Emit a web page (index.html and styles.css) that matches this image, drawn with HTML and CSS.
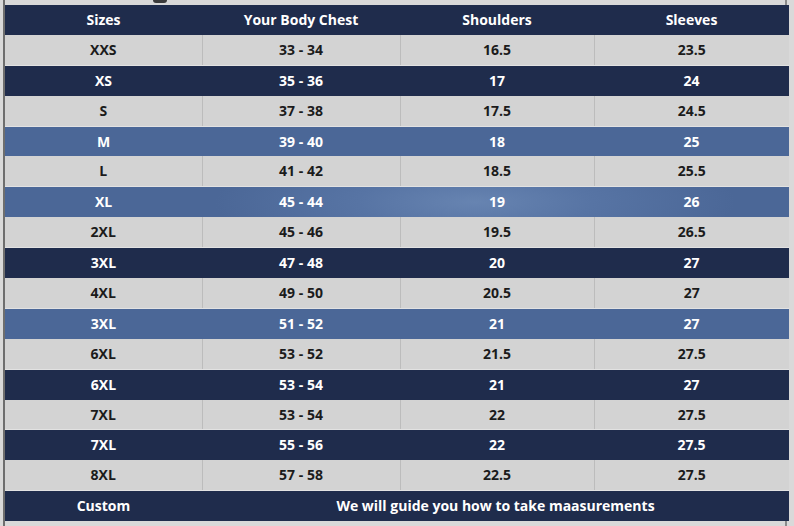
FILE: index.html
```html
<!DOCTYPE html>
<html>
<head>
<meta charset="utf-8">
<link rel="stylesheet" href="styles.css">
</head>
<body>
<div class="frame">
  <span class="smudge"></span>
  <table class="chart">
    <colgroup>
      <col class="c1"><col class="c2"><col class="c3"><col class="c4">
    </colgroup>
    <thead>
      <tr class="navy"><th>Sizes</th><th>Your Body Chest</th><th>Shoulders</th><th>Sleeves</th></tr>
    </thead>
    <tbody>
      <tr class="grey"><td>XXS</td><td>33 - 34</td><td>16.5</td><td>23.5</td></tr>
      <tr class="navy"><td>XS</td><td>35 - 36</td><td>17</td><td>24</td></tr>
      <tr class="grey"><td>S</td><td>37 - 38</td><td>17.5</td><td>24.5</td></tr>
      <tr class="blue"><td>M</td><td>39 - 40</td><td>18</td><td>25</td></tr>
      <tr class="grey"><td>L</td><td>41 - 42</td><td>18.5</td><td>25.5</td></tr>
      <tr class="blue glow"><td>XL</td><td>45 - 44</td><td>19</td><td>26</td></tr>
      <tr class="grey"><td>2XL</td><td>45 - 46</td><td>19.5</td><td>26.5</td></tr>
      <tr class="navy"><td>3XL</td><td>47 - 48</td><td>20</td><td>27</td></tr>
      <tr class="grey"><td>4XL</td><td>49 - 50</td><td>20.5</td><td>27</td></tr>
      <tr class="blue"><td>3XL</td><td>51 - 52</td><td>21</td><td>27</td></tr>
      <tr class="grey"><td>6XL</td><td>53 - 52</td><td>21.5</td><td>27.5</td></tr>
      <tr class="navy"><td>6XL</td><td>53 - 54</td><td>21</td><td>27</td></tr>
      <tr class="grey"><td>7XL</td><td>53 - 54</td><td>22</td><td>27.5</td></tr>
      <tr class="navy"><td>7XL</td><td>55 - 56</td><td>22</td><td>27.5</td></tr>
      <tr class="grey"><td>8XL</td><td>57 - 58</td><td>22.5</td><td>27.5</td></tr>
      <tr class="navy"><td>Custom</td><td colspan="3">We will guide you how to take maasurements</td></tr>
    </tbody>
  </table>
</div>
</body>
</html>
```
FILE: styles.css
```css
html, body {
  margin: 0;
  padding: 0;
  background: #d9d9d9;
}
body {
  width: 794px;
  height: 526px;
  overflow: hidden;
  font-family: "Open Sans", "DejaVu Sans", sans-serif;
}
.frame {
  position: relative;
  margin-left: 3px;
  width: 784px;
  padding-top: 4.5px;
  border-left: 2px solid #6e6e6e;
  border-right: 2px solid #8a8a8a;
  height: 526px;
  box-sizing: border-box;
}
.smudge {
  position: absolute;
  left: 148px;
  top: 0;
  width: 14px;
  height: 3px;
  border-radius: 0 0 7px 7px;
  background: #3b3b3b;
}
.chart {
  width: 784px;
  border-collapse: collapse;
  table-layout: fixed;
}
.c1 { width: 197px; }
.c2 { width: 198px; }
.c3 { width: 194px; }
.c4 { width: 195px; }
.chart th, .chart td {
  height: 30.4px;
  padding: 0;
  box-sizing: border-box;
  text-align: center;
  vertical-align: middle;
  font-size: 14px;
  font-weight: 700;
  line-height: 1;
}
.navy { background: #1f2c4c; color: #ffffff; }
.blue { background: #4b6797; color: #ffffff; }
.glow {
  background: radial-gradient(ellipse 260px 60px at 470px 50%, #6784b1 0%, #5774a4 45%, #4b6797 100%);
}
.grey { background: #d3d3d3; color: #1b1b1b; }
.grey td + td { border-left: 1px solid #bcbcbc; }
.grey td { border-bottom: 1px solid #e2e2e2; }
```
